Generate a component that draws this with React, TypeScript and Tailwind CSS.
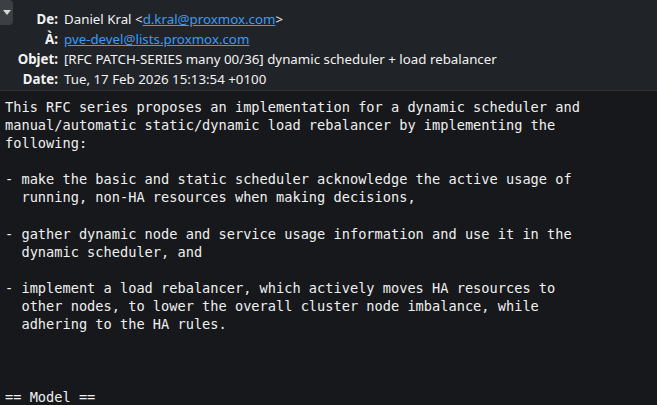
const headers: { label: string; value: React.ReactNode }[] = [
  {
    label: "De:",
    value: (
      <>
        Daniel Kral &lt;
        <a href="#" className="text-[#3b9cf5] underline">
          d.kral@proxmox.com
        </a>
        &gt;
      </>
    ),
  },
  {
    label: "À:",
    value: (
      <a href="#" className="text-[#3b9cf5] underline">
        pve-devel@lists.proxmox.com
      </a>
    ),
  },
  {
    label: "Objet:",
    value: "[RFC PATCH-SERIES many 00/36] dynamic scheduler + load rebalancer",
  },
  { label: "Date:", value: "Tue, 17 Feb 2026 15:13:54 +0100" },
];

const body = `This RFC series proposes an implementation for a dynamic scheduler and
manual/automatic static/dynamic load rebalancer by implementing the
following:

- make the basic and static scheduler acknowledge the active usage of
  running, non-HA resources when making decisions,

- gather dynamic node and service usage information and use it in the
  dynamic scheduler, and

- implement a load rebalancer, which actively moves HA resources to
  other nodes, to lower the overall cluster node imbalance, while
  adhering to the HA rules.



== Model ==`;

export default function App() {
  return (
    <div className="flex h-[405px] w-[657px] flex-col overflow-hidden bg-[#16181b]">
      <div className="relative h-[91px] shrink-0 border-b border-[#2c2f33] bg-[#202327] pt-[9px] font-['Noto_Sans',sans-serif] text-[13.3px] text-[#f2f2f2]">
        <button className="absolute left-0 top-0 flex h-[25px] w-[13px] items-center justify-center rounded-br-[4px] rounded-tr-[4px] bg-[#3c3f44]">
          <svg width="8" height="5" viewBox="0 0 8 5">
            <path d="M0 0 L8 0 L4 5 Z" fill="#d8d8d8" />
          </svg>
        </button>
        <div className="grid grid-cols-[58px_1fr] gap-x-[6px]">
          {headers.map((h) => (
            <div key={h.label} className="contents">
              <div className="h-5 text-right font-bold leading-5">{h.label}</div>
              <div className="h-5 whitespace-nowrap leading-5">{h.value}</div>
            </div>
          ))}
        </div>
      </div>
      <pre className="px-[5px] pt-[7px] font-['DejaVu_Sans_Mono',monospace] text-[13.65px] leading-[18.1px] text-[#f0f0f0]">
        {body}
      </pre>
    </div>
  );
}
